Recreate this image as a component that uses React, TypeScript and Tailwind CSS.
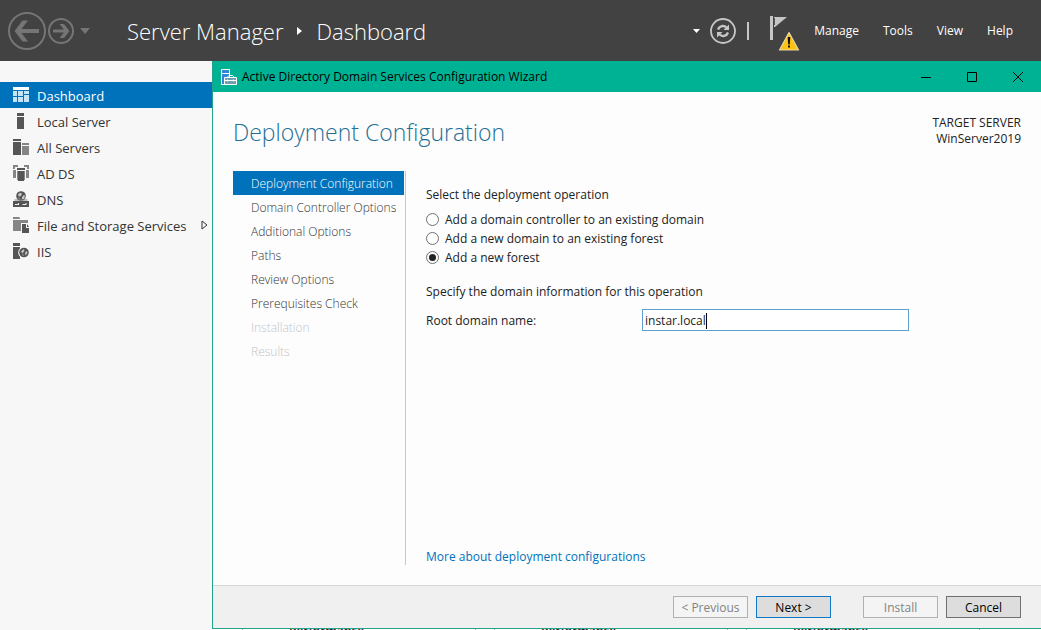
import { useState } from 'react';
import type { ReactNode } from 'react';

const DARK = '#555555';
const MID = '#858585';

function DashboardIcon() {
  return (
    <svg width="16" height="16" viewBox="0 0 16 16" aria-hidden="true" shapeRendering="crispEdges">
      <path d="M0 0h16v3H0z" fill="#fff" />
      <path d="M0 4h4v5H0zM5 4h5v5H5zM11 4h5v3h-5zM0 10h4v5H0zM5 10h5v5H5zM11 8h5v7h-5z" fill="#c4e4f8" />
    </svg>
  );
}

function LocalServerIcon() {
  return (
    <svg width="16" height="16" viewBox="0 0 16 16" aria-hidden="true" shapeRendering="crispEdges">
      <path d="M4 0h7v3H4zM4 4h7v12H4z" fill={DARK} />
    </svg>
  );
}

function AllServersIcon() {
  return (
    <svg width="16" height="16" viewBox="0 0 16 16" aria-hidden="true" shapeRendering="crispEdges">
      <path d="M0 0h8v2H0zM0 3h8v13H0z" fill={DARK} />
      <path d="M9 4h7v2H9zM9 7h7v9H9z" fill={MID} />
    </svg>
  );
}

function AdDsIcon() {
  return (
    <svg width="16" height="16" viewBox="0 0 16 16" aria-hidden="true" shapeRendering="crispEdges">
      <path d="M0 0h5v2H2v2H0zM11 0h5v4h-2V2h-3zM0 5h3v8H0zM13 5h3v8h-3z" fill={MID} />
      <path d="M4 3h8v2H4zM5 6h6v10H5z" fill={DARK} />
      <path d="M4 6h1v9H4zM11 6h1v9h-1z" fill={MID} />
    </svg>
  );
}

function DnsIcon() {
  return (
    <svg width="16" height="16" viewBox="0 0 16 16" aria-hidden="true">
      <circle cx="8" cy="5" r="4.8" fill={DARK} />
      <path d="M5 3.500 7 1.800l2 1-1 2-2 1zM9 6l2-2 1 1-1 3H9zM5 6.500l1.500.5v1.500z" fill="#c8c8c8" />
      <path d="M1.500 8.500h13v1h-13z" fill={MID} />
      <path d="M0 10h16v6H0z" fill={DARK} />
      <path d="M2 13.500h4M9.500 13.500h4" stroke="#f0f0f0" strokeWidth="1" />
      <path d="M5 12h1v1H5zM12.500 12h1v1h-1z" fill="#f0f0f0" />
    </svg>
  );
}

function StorageIcon() {
  return (
    <svg width="16" height="16" viewBox="0 0 16 16" className="shrink-0" aria-hidden="true">
      <path d="M0 0h6l1 1v1H0zM0 3h15v3H8v8H0z" fill={MID} />
      <path d="M9 7h4v4h3v5H9z" fill={DARK} />
      <path d="M14 7l2 3h-2z" fill={DARK} />
    </svg>
  );
}

function IisIcon() {
  return (
    <svg width="16" height="16" viewBox="0 0 16 16" aria-hidden="true">
      <path d="M0 0h7v3H0zM0 4h7v12H0z" fill={DARK} />
      <circle cx="11" cy="9.500" r="5.800" fill="#f7f7f7" />
      <circle cx="11" cy="9.500" r="4.800" fill={DARK} />
      <path d="M8 8.500 10.500 6l1 1.500-2 3zM12 9.500l2-1.500.5 2-2 2.500zM9 11.500l1.500 0v1.500z" fill="#c4c4c4" />
    </svg>
  );
}

function BackForward() {
  return (
    <div className="flex items-center text-[#757575]">
      <button type="button" aria-label="Back">
        <svg width="38" height="38" viewBox="0 0 38 38" fill="none" stroke="currentColor" aria-hidden="true">
          <circle cx="19" cy="19" r="18" strokeWidth="2" />
          <path d="M31 19H11" strokeWidth="4" />
          <path d="M20 8.500h-5.500L6.500 19l8 10.500H20L12 19z" fill="currentColor" stroke="none" />
        </svg>
      </button>
      <button type="button" aria-label="Forward" className="ml-0.5">
        <svg width="26" height="26" viewBox="0 0 26 26" fill="none" stroke="currentColor" aria-hidden="true">
          <circle cx="13" cy="13" r="12" strokeWidth="2" />
          <path d="M5 13h13" strokeWidth="3" />
          <path d="M11.500 6h4.500l5.500 7-5.500 7h-4.500l5.500-7z" fill="currentColor" stroke="none" />
        </svg>
      </button>
      <button type="button" aria-label="History" className="ml-1.5">
        <svg width="10" height="6" viewBox="0 0 10 6" aria-hidden="true">
          <path d="M0 0h10L5 6z" fill="currentColor" />
        </svg>
      </button>
    </div>
  );
}

function Toolbar() {
  return (
    <header className="flex h-[61px] shrink-0 items-center bg-[#424242] pl-2 text-white">
      <BackForward />
      <h1 className="ml-[37px] flex items-center gap-3.5 pt-px text-[22px] leading-8 font-light whitespace-nowrap">
        <span>Server Manager</span>
        <svg width="5" height="8" viewBox="0 0 5 8" aria-hidden="true">
          <path d="M0 0v8l5-4z" fill="#fff" />
        </svg>
        <span>Dashboard</span>
      </h1>
      <div className="ml-auto flex items-center">
        <button type="button" aria-label="Notifications list">
          <svg width="7" height="4" viewBox="0 0 7 4" aria-hidden="true">
            <path d="M0 0h7L3.500 4z" fill="#fff" />
          </svg>
        </button>
        <button type="button" aria-label="Refresh" className="ml-2.5">
          <svg width="26" height="26" viewBox="0 0 26 26" fill="none" stroke="#c6c6c6" aria-hidden="true">
            <circle cx="13" cy="13" r="12" strokeWidth="1.800" />
            <path d="M8 11.500a5.200 5.200 0 0 1 8.500-2" strokeWidth="2.400" />
            <path d="M18 14.500a5.200 5.200 0 0 1-8.500 2" strokeWidth="2.400" />
            <path d="M19 6.500v5.500h-5.500zM7 19.500V14h5.500z" fill="#c6c6c6" stroke="none" />
          </svg>
        </button>
        <span className="ml-[11px] h-[18px] w-0.5 bg-[#c6c6c6]" />
        <button type="button" aria-label="Notifications" className="ml-[21px]">
          <svg width="30" height="36" viewBox="0 0 30 36" className="mt-1.5" aria-hidden="true">
            <path d="M0 0h3v24H0z" fill="#c6c6c6" />
            <path d="M4 1h13L5 11H4z" fill="#c6c6c6" />
            <path d="M4.500 2v7" stroke="#555" strokeWidth="1" />
            <path d="M19 16.500 28.500 34h-19z" fill="#ffc20e" stroke="#e6d9b0" strokeWidth="1.200" strokeLinejoin="round" />
            <path d="M17.700 21h2.600l-.5 7.500h-1.600zM18 29.500h2v2h-2z" fill="#111" />
          </svg>
        </button>
        <nav className="ml-3.5 flex gap-6 pt-px pr-7 text-[12px] leading-4">
          <button type="button">Manage</button>
          <button type="button">Tools</button>
          <button type="button">View</button>
          <button type="button">Help</button>
        </nav>
      </div>
    </header>
  );
}

const sideItems: { label: string; icon: ReactNode; expandable?: boolean }[] = [
  { label: 'Dashboard', icon: <DashboardIcon /> },
  { label: 'Local Server', icon: <LocalServerIcon /> },
  { label: 'All Servers', icon: <AllServersIcon /> },
  { label: 'AD DS', icon: <AdDsIcon /> },
  { label: 'DNS', icon: <DnsIcon /> },
  { label: 'File and Storage Services', icon: <StorageIcon />, expandable: true },
  { label: 'IIS', icon: <IisIcon /> },
];

function Sidebar() {
  return (
    <nav className="w-[212px] shrink-0 bg-[#f7f7f7] pt-[21px]">
      <ul>
        {sideItems.map((item, i) => (
          <li key={item.label}>
            <a
              href="#"
              className={
                i === 0
                  ? 'flex h-[26px] items-center gap-2 bg-[#0072bc] pr-1 pl-[13px] text-[13px] leading-5 whitespace-nowrap text-white'
                  : 'flex h-[26px] items-center gap-2 pr-1 pl-[13px] text-[13px] leading-5 whitespace-nowrap text-[#333]'
              }
            >
              {item.icon}
              <span className="pt-0.5">{item.label}</span>
              {item.expandable && (
                <svg width="7" height="10" viewBox="0 0 7 10" className="ml-auto" aria-hidden="true">
                  <path d="M1 1v8l5-4z" fill="none" stroke="#333" strokeWidth="1" />
                </svg>
              )}
            </a>
          </li>
        ))}
      </ul>
    </nav>
  );
}

function TitleBar() {
  return (
    <div className="flex h-[31px] shrink-0 items-center bg-[#00b294] pl-2 text-black">
      <svg width="16" height="16" viewBox="0 0 16 16" aria-hidden="true">
        <path d="M.5.500h8v15h-8z" fill="#2f86d6" stroke="#fff" />
        <path d="M1 4.500h7" stroke="#fff" />
        <path d="M3.500 8.500h12v7h-12z" fill="#6f9fae" stroke="#fff" />
        <path d="M6.500 8l1.500-1.500h3.500L13 8M4 11.500h11M6.500 10.500v2M12.500 10.500v2" fill="none" stroke="#fff" />
      </svg>
      <h2 className="ml-[5px] text-[12px] leading-4 whitespace-nowrap">
        Active Directory Domain Services Configuration Wizard
      </h2>
      <div className="ml-auto flex">
        <button type="button" aria-label="Minimize" className="flex w-[46px] justify-center">
          <svg width="10" height="10" viewBox="0 0 10 10" stroke="#000" aria-hidden="true">
            <path d="M0 5.500h10" />
          </svg>
        </button>
        <button type="button" aria-label="Maximize" className="flex w-[46px] justify-center">
          <svg width="10" height="10" viewBox="0 0 10 10" stroke="#000" fill="none" aria-hidden="true">
            <path d="M.5.500h9v9h-9z" />
          </svg>
        </button>
        <button type="button" aria-label="Close" className="flex w-[46px] justify-center">
          <svg width="10" height="10" viewBox="0 0 10 10" stroke="#000" aria-hidden="true">
            <path d="M0 0l10 10M10 0L0 10" />
          </svg>
        </button>
      </div>
    </div>
  );
}

const steps = [
  'Deployment Configuration',
  'Domain Controller Options',
  'Additional Options',
  'Paths',
  'Review Options',
  'Prerequisites Check',
  'Installation',
  'Results',
];

function stepClass(i: number) {
  if (i === 0) return 'flex h-6 w-full items-center bg-[#0072bc] pt-0.5 pl-[18px] text-white';
  if (i >= 6) return 'flex h-6 w-full items-center pt-0.5 pl-[18px] text-[#c4c4c4]';
  return 'flex h-6 w-full items-center pt-0.5 pl-[18px] text-[#333]';
}

function Steps() {
  return (
    <ol className="w-[173px] shrink-0 border-r border-[#c8c8c8] pr-px text-[12px] leading-5 whitespace-nowrap">
      {steps.map((s, i) => (
        <li key={s}>
          <button type="button" disabled={i >= 6} className={stepClass(i)}>
            <span className="font-light">{s}</span>
          </button>
        </li>
      ))}
    </ol>
  );
}

const operations = [
  'Add a domain controller to an existing domain',
  'Add a new domain to an existing forest',
  'Add a new forest',
];

function DeploymentForm() {
  const [operation, setOperation] = useState(2);
  const [domain, setDomain] = useState('instar.local');
  return (
    <form className="flex min-w-0 flex-1 flex-col pt-4 pl-5 text-[12px] leading-4 text-[#222]">
      <fieldset>
        <legend>Select the deployment operation</legend>
        <div className="mt-[7px] flex flex-col">
          {operations.map((o, i) => (
            <label key={o} className="flex h-[19px] items-center gap-1.5">
              <input
                type="radio"
                name="operation"
                checked={operation === i}
                onChange={() => setOperation(i)}
                className="size-[13px] appearance-none rounded-full border border-[#707070] bg-white bg-clip-content p-[2px] checked:bg-[#222]"
              />
              {o}
            </label>
          ))}
        </div>
      </fieldset>
      <p className="mt-[17px]">Specify the domain information for this operation</p>
      <div className="mt-[9px] flex items-center">
        <label htmlFor="root-domain" className="w-[216px] shrink-0 pt-0.5">
          Root domain name:
        </label>
        <div className="flex h-[22px] w-[267px] items-center border border-[#5f9fd0] bg-white pt-px pl-0.5">
          <input
            id="root-domain"
            type="text"
            value={domain}
            onChange={(e) => setDomain(e.target.value)}
            className="field-sizing-content outline-none"
          />
          <span className="h-4 w-px bg-black" />
        </div>
      </div>
      <a href="#" className="mt-auto self-start text-[#0072bc]">
        More about deployment configurations
      </a>
    </form>
  );
}

function Footer() {
  return (
    <div className="flex h-[43px] shrink-0 items-center justify-end gap-2 border-t border-[#d8d8d8] bg-[#f0f0f0] pr-5 text-[12px] leading-4">
      <button type="button" disabled className="h-[22px] w-[75px] border border-[#adb2b5] bg-[#f4f4f4] pt-0.5 text-[#838383]">
        &lt; Previous
      </button>
      <button type="button" className="h-[22px] w-[75px] border border-[#0f77c4] bg-[#dddddd] pt-0.5 text-black">
        Next &gt;
      </button>
      <button type="button" disabled className="ml-6 h-[22px] w-[75px] border border-[#adb2b5] bg-[#f4f4f4] pt-0.5 text-[#838383]">
        Install
      </button>
      <button type="button" className="h-[22px] w-[75px] border border-[#707070] bg-[#dddddd] pt-0.5 text-black">
        Cancel
      </button>
    </div>
  );
}

function Wizard() {
  return (
    <section className="flex min-h-0 flex-1 flex-col border-b border-l border-[#21a38c] bg-[#fdfdfd]">
      <TitleBar />
      <div className="flex min-h-0 flex-1 flex-col px-5 pb-5">
        <div className="flex items-start justify-between pt-[22px]">
          <h3 className="text-[23px] leading-9 font-light whitespace-nowrap text-[#1f6f94]">Deployment Configuration</h3>
          <div className="pt-px text-right text-[12px] leading-4 text-[#222]">
            <p>TARGET SERVER</p>
            <p>WinServer2019</p>
          </div>
        </div>
        <div className="mt-[21px] flex min-h-0 flex-1">
          <Steps />
          <DeploymentForm />
        </div>
      </div>
      <Footer />
    </section>
  );
}

function TileStrip() {
  return (
    <div className="flex h-px shrink-0 gap-[18px] overflow-hidden bg-white pl-[30px] text-[12px] leading-1 font-semibold text-[#222]">
      {[0, 1, 2].map((n) => (
        <div key={n} className="w-[234px] shrink-0 border-x border-[#8fb5ae] pl-[46px]">
          Performance
        </div>
      ))}
    </div>
  );
}

export default function App() {
  return (
    <div className="flex h-screen flex-col overflow-hidden bg-[#f7f7f7] font-['Open_Sans','Noto_Sans',sans-serif]">
      <Toolbar />
      <div className="flex min-h-0 flex-1">
        <Sidebar />
        <main className="flex min-w-0 flex-1 flex-col">
          <Wizard />
          <TileStrip />
        </main>
      </div>
    </div>
  );
}
